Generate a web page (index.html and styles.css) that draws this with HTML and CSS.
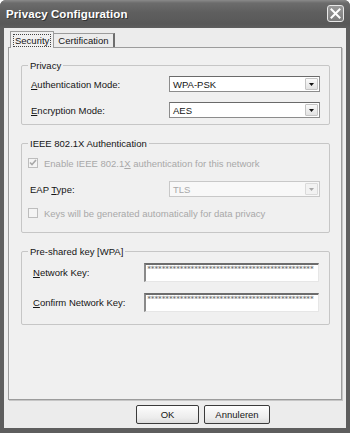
FILE: index.html
```html
<!DOCTYPE html>
<html lang="nl">
<head>
    <meta charset="UTF-8">
    <meta name="viewport" content="width=device-width, initial-scale=1.0">
    <title>Privacy Configuration</title>
    <link rel="stylesheet" href="styles.css">
</head>
<body>

    <div class="window">
        <div class="titlebar">
            <span class="title">Privacy Configuration</span>
            <button class="close-btn" aria-label="Sluiten">
                <svg width="11" height="11" viewBox="0 0 11 11"><path d="M1.5 1.5l8 8M9.5 1.5l-8 8" stroke="#fff" stroke-width="2" stroke-linecap="square"/></svg>
            </button>
        </div>

        <div class="client">
            <div class="tabs">
                <div class="tab tab-active"><span class="tab-focus">Security</span></div>
                <div class="tab">Certification</div>
            </div>

            <div class="panel">
                <!-- Privacy -->
                <div class="group group-privacy">
                    <span class="group-title">Privacy</span>
                    <div class="group-body">
                        <div class="row">
                            <span class="row-label"><u>A</u>uthentication Mode:</span>
                            <div class="select">
                                <span class="select-value">WPA-PSK</span>
                                <span class="select-btn"><svg width="5" height="3" viewBox="0 0 5 3"><path d="M0 0h5L2.5 3z" fill="#111"/></svg></span>
                            </div>
                        </div>
                        <div class="row">
                            <span class="row-label"><u>E</u>ncryption Mode:</span>
                            <div class="select">
                                <span class="select-value">AES</span>
                                <span class="select-btn"><svg width="5" height="3" viewBox="0 0 5 3"><path d="M0 0h5L2.5 3z" fill="#111"/></svg></span>
                            </div>
                        </div>
                    </div>
                </div>

                <!-- IEEE 802.1X -->
                <div class="group group-ieee">
                    <span class="group-title">IEEE 802.1X Authentication</span>
                    <div class="group-body">
                        <div class="check-row disabled">
                            <span class="check"><svg width="8" height="8" viewBox="0 0 8 8"><path d="M1 3.5l2 2 4-4.5" stroke="#a8a8a8" stroke-width="1.6" fill="none"/></svg></span>
                            <span>Enable IEEE 802.1<u>X</u> authentication for this network</span>
                        </div>
                        <div class="row">
                            <span class="row-label eap-label">EAP <u>T</u>ype:</span>
                            <div class="select select-disabled">
                                <span class="select-value">TLS</span>
                                <span class="select-btn"><svg width="5" height="3" viewBox="0 0 5 3"><path d="M0 0h5L2.5 3z" fill="#a8a8a8"/></svg></span>
                            </div>
                        </div>
                        <div class="check-row disabled">
                            <span class="check"></span>
                            <span>Keys will be generated automatically for data privacy</span>
                        </div>
                    </div>
                </div>

                <!-- Pre-shared key -->
                <div class="group group-psk">
                    <span class="group-title">Pre-shared key [WPA]</span>
                    <div class="group-body">
                        <div class="row row-input">
                            <span class="row-label key-label"><u>N</u>etwork Key:</span>
                            <div class="key-input">**********************************************</div>
                        </div>
                        <div class="row row-input">
                            <span class="row-label key-label"><u>C</u>onfirm Network Key:</span>
                            <div class="key-input">**********************************************</div>
                        </div>
                    </div>
                </div>
            </div>

            <div class="button-bar">
                <button class="dlg-btn">OK</button>
                <button class="dlg-btn dlg-btn-wide">Annuleren</button>
            </div>
        </div>
    </div>

</body>
</html>
```

FILE: styles.css
```css
:root {
    --frame: #5e5e5e;
    --face: #ececec;
    --panel: #f0f0f0;
    --text: #151515;
    --text-disabled: #a8a8a8;
    --group-line: #c6c6c6;
    --tab-line: #9c9c9c;
}

* {
    box-sizing: border-box;
    margin: 0;
    padding: 0;
}

body {
    font-family: 'Liberation Sans', Arial, sans-serif;
    font-size: 9.5px;
    color: var(--text);
    background: #ffffff;
}

.window {
    width: 350px;
    height: 433px;
    display: flex;
    flex-direction: column;
    background: var(--frame);
    padding: 0 4px 5px;
    border-radius: 6px 6px 0 0;
}

/* Title bar */
.titlebar {
    height: 28px;
    display: flex;
    align-items: center;
    justify-content: space-between;
    margin: 0 -4px;
    padding: 0 6px;
    background: linear-gradient(#8a8a8a 0, #6c6c6c 3px, #5f5f5f 12px, #585858 24px, #5e5e5e 28px);
    border-radius: 6px 6px 0 0;
}

.title {
    color: #ffffff;
    font-weight: 700;
    font-size: 11.5px;
    text-shadow: 1px 1px 0 #333333;
    letter-spacing: 0.1px;
}

.close-btn {
    width: 17px;
    height: 17px;
    border: 1px solid #e8e8e8;
    border-radius: 3px;
    background: linear-gradient(#9a9a9a, #7c7c7c);
    display: flex;
    align-items: center;
    justify-content: center;
    margin-bottom: 1px;
}

/* Client area */
.client {
    flex: 1;
    display: flex;
    flex-direction: column;
    background: var(--face);
    padding: 3px 4px 4px;
}

.tabs {
    display: flex;
    align-items: flex-end;
    height: 17px;
    padding-left: 2px;
    margin-bottom: -1px;
}

.tab {
    height: 14px;
    margin-bottom: 1px;
    padding: 0 4px;
    border: 1px solid var(--tab-line);
    border-bottom: none;
    border-left: none;
    border-right: 2px solid #6e6e6e;
    background: var(--face);
    line-height: 13px;
}

.tab-active {
    position: relative;
    z-index: 1;
    height: 17px;
    margin-bottom: 0;
    padding: 2px 2px 0;
    border-left: 1px solid var(--tab-line);
    border-right: 1px solid var(--tab-line);
    background: var(--panel);
}

.tab-focus {
    display: inline-block;
    border: 1px dotted #444444;
    padding: 0 1px;
    line-height: 11px;
}

.panel {
    flex: 1;
    background: var(--panel);
    border: 1px solid var(--tab-line);
    box-shadow: 1px 1px 0 #c6c6c6;
    padding: 12px 11px 0 12px;
}

/* Group boxes */
.group {
    border: 1px solid var(--group-line);
    border-radius: 2px;
    padding: 0 9px 6px;
}

.group-privacy {
    margin-top: 5px;
}

.group-ieee {
    margin-top: 18px;
    padding: 0 9px 13px 5px;
}

.group-psk {
    margin-top: 18px;
    padding: 0 10px 12px 11px;
}

.group-title {
    display: block;
    width: fit-content;
    margin: -6px 0 0 -3px;
    padding: 0 2px;
    line-height: 11px;
    background: var(--panel);
}

.group-ieee .group-title {
    margin-left: 1px;
}

.group-psk .group-title {
    margin-left: -5px;
}

.group-body {
    display: flex;
    flex-direction: column;
    gap: 10px;
    margin-top: 5px;
}

.row {
    display: flex;
    align-items: center;
    height: 16px;
}

.row-label {
    width: 138px;
    flex: none;
}

.eap-label {
    width: 142px;
    padding-left: 3px;
}

.key-label {
    width: 111px;
}

/* Dropdowns */
.select {
    width: 151px;
    height: 16px;
    display: flex;
    align-items: center;
    justify-content: space-between;
    background: #ffffff;
    border: 1px solid #8c8c8c;
    border-top-color: #6a6a6a;
    padding: 0 1px 0 3px;
}

.select-btn {
    width: 13px;
    height: 12px;
    display: flex;
    align-items: center;
    justify-content: center;
    border: 1px solid #c4c4c4;
    border-radius: 1px;
    background: linear-gradient(#fafafa, #e2e2e2);
}

.select-disabled {
    color: var(--text-disabled);
    background: #f8f8f8;
    border-color: #c8c8c8;
}

.select-disabled .select-btn {
    border-color: #dadada;
    background: #f2f2f2;
}

/* Checkboxes */
.group-ieee .group-body {
    gap: 0;
    margin-top: 8px;
}

.check-row {
    display: flex;
    align-items: center;
    gap: 6px;
    height: 12px;
}

.group-ieee .row {
    margin: 12px 0 10px;
}

.check {
    width: 10px;
    height: 10px;
    flex: none;
    display: flex;
    align-items: center;
    justify-content: center;
    border: 1px solid #bdbdbd;
    background: #f4f4f4;
    margin-left: 1px;
}

.disabled {
    color: var(--text-disabled);
}

/* Key inputs */
.group-psk .group-body {
    margin-top: 6px;
    gap: 11px;
}

.row-input {
    height: 19px;
    align-items: flex-start;
}

.row-input .row-label {
    align-self: center;
}

.key-input {
    width: 176px;
    height: 19px;
    background: #ffffff;
    border-top: 2px solid #6c6c6c;
    border-left: 2px solid #8a8a8a;
    border-right: 1px solid #e6e6e6;
    border-bottom: 1px solid #e6e6e6;
    font-family: 'DejaVu Sans Mono', monospace;
    font-size: 7px;
    font-weight: 700;
    line-height: 6px;
    color: #7a7a7a;
    letter-spacing: -0.6px;
    white-space: nowrap;
    overflow: hidden;
    padding: 1px 0 0 1px;
}

/* Dialog buttons */
.button-bar {
    display: flex;
    justify-content: flex-end;
    gap: 5px;
    margin-top: 5px;
    padding-right: 72px;
}

.dlg-btn {
    width: 63px;
    height: 19px;
    font-family: inherit;
    font-size: 9.5px;
    color: var(--text);
    border: 1px solid #3a3a3a;
    border-radius: 2px;
    background: linear-gradient(#fdfdfd, #ececec 70%, #dcdcdc);
}

.dlg-btn-wide {
    width: 66px;
}
```
